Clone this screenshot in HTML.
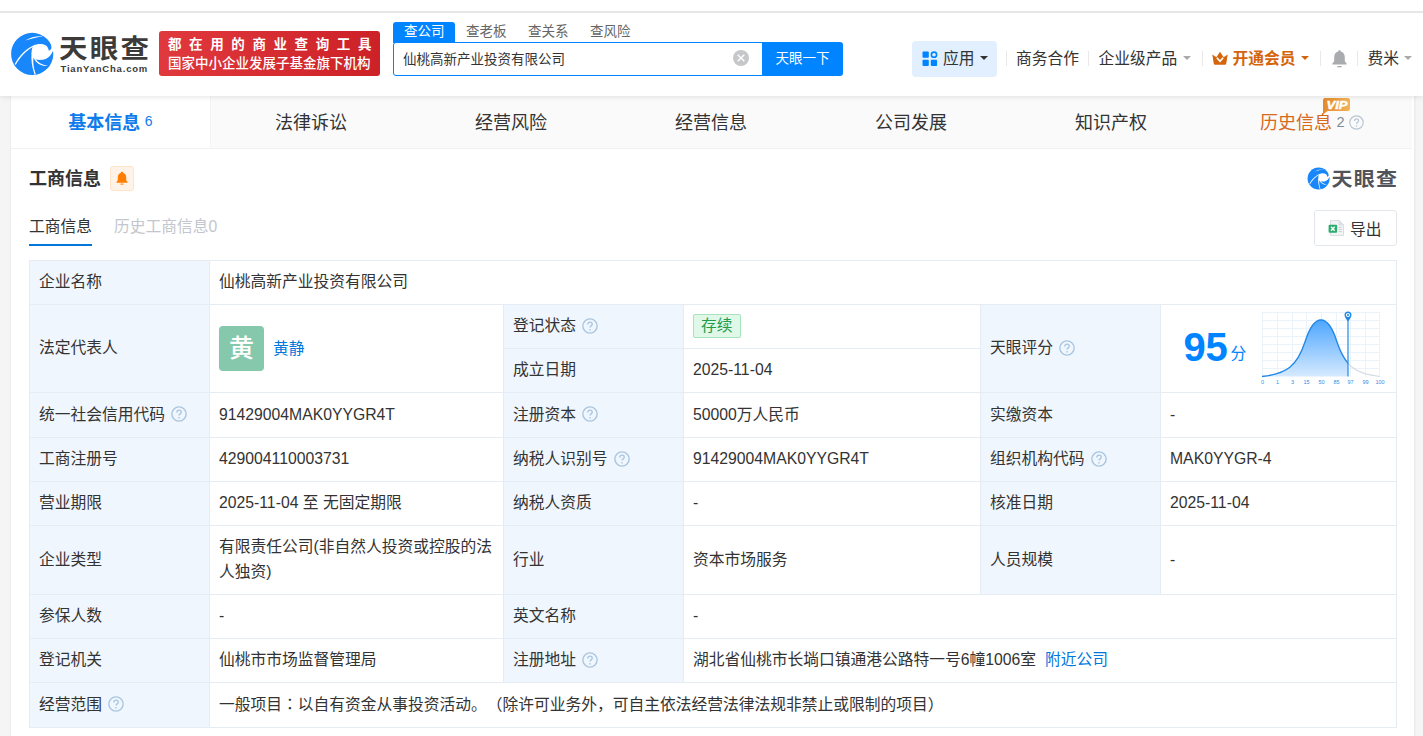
<!DOCTYPE html>
<html lang="zh-CN">
<head>
<meta charset="utf-8">
<title>仙桃高新产业投资有限公司 - 天眼查</title>
<style>
*{box-sizing:border-box;margin:0;padding:0}
html,body{width:1423px;height:736px;overflow:hidden;background:#f5f5f5;}
body{text-spacing-trim:space-all;font-family:"Liberation Sans","Noto Sans CJK SC",sans-serif;color:#333;font-size:15.75px;position:relative}
.abs{position:absolute}
.t{position:absolute;white-space:nowrap;line-height:1}
#hdr{position:absolute;left:0;top:0;width:1423px;height:96px;background:#fff;box-shadow:0 1px 5px rgba(0,0,0,.10);z-index:5}
#topline{position:absolute;left:0;top:11px;width:1423px;height:2px;background:#e6e6e6}
#card{position:absolute;left:11px;top:96px;width:1403px;height:640px;background:#fff;box-shadow:-1px 0 0 #ececec,1.500px 0 0 #ececec}
#tabs{position:absolute;left:0;top:0;width:1401px;height:53px;background:#fafafa;border-bottom:1px solid #f1f1f1}
.tab{position:absolute;top:0;height:52px;line-height:54px;text-align:center;font-size:18px;color:#333;white-space:nowrap}
.tab.on{background:#fff;color:#0f7ceb;font-weight:bold;border-right:1px solid #f3f3f3}
.cnt{font-size:14px;font-weight:normal;margin-left:4.500px;position:relative;top:-3px}
table{position:absolute;left:18px;top:164px;width:1368px;border-collapse:collapse;table-layout:fixed;font-size:15.75px}
td{border:1px solid #e5ecf4;padding:0 9px 2px 9px;vertical-align:middle;line-height:25px;color:#333;white-space:nowrap;overflow:hidden}
td.l{background:#f0f6fd}
.q{display:inline-block;width:16px;height:16px;vertical-align:-2.500px;margin-left:6px}
a{color:#0077dd;text-decoration:none}
.ava{display:inline-block;width:45px;height:45px;line-height:45px;border-radius:4px;background:#85c8ab;color:#fff;font-size:25px;font-weight:500;text-align:center;vertical-align:middle}
.st{display:inline-block;height:24px;line-height:22px;padding:0 7px;position:relative;top:-.5px;border:1px solid #a8e3bf;background:#dff8e8;color:#1f9d4c;border-radius:2px;font-size:15.750px}
</style>
</head>
<body>
<div id="hdr">
  <div id="topline"></div>
  <!-- logo -->
  <svg class="abs" style="left:10px;top:32px" width="44" height="44" viewBox="0 0 44 44">
<circle cx="22.2" cy="21.9" r="21.1" fill="#1787fb"/>
<path d="M38.7 18.7 C38.6 16.6 37.6 14.6 35.6 13.3 C32.6 11.4 27.2 11.6 23.4 13.5 C21.9 16 21.3 19 21.7 22 C22.2 24.3 23.2 26 24.6 27 C27.5 28.2 31.5 28.3 35 27.2 C38.5 26 41.3 23.400 42.600 19.600 L45 19 L45 11 L40.300 10.500 C41.300 12.600 41.700 14.800 41.300 16.600 C40.800 17.800 39.900 18.500 38.700 18.700 Z" fill="#fff"/>
<path d="M15.100 8.500 C20.500 5.200 27 3.800 33 4.400 C27.500 5 21.500 6.500 15.100 8.500 Z" fill="#fff"/>
<path d="M4.800 31.800 C9.200 23.700 15.500 17 23.400 13.400 L24.300 14.300 C17 17.800 10.500 24.500 5.700 33 Z" fill="#fff"/>
<path d="M21.600 20.500 C20.800 27 21.900 35 24.600 42.700 L25.800 42.300 C23.300 35 22.800 28.500 23.800 25 Z" fill="#fff"/>
<path d="M23.800 26 C26 31.500 31.500 34.500 38 34 C32.500 33 28 30.500 25.600 27 Z" fill="#fff"/>
  </svg>
  <div class="t" style="left:59px;top:35.5px;font-size:28.5px;font-weight:700;color:#3d3a3a;letter-spacing:2.2px;transform-origin:0 0;transform:scale(1,.93)">天眼查</div>
  <div class="t" style="left:60.5px;top:63.500px;font-size:9.500px;font-weight:bold;color:#3d3a3a;letter-spacing:.8px">TianYanCha.com</div>
  <!-- red banner -->
  <div class="abs" style="left:159px;top:31px;width:221px;height:45px;border-radius:3px;background:linear-gradient(90deg,#e0393d,#cc2127)"></div>
  <div class="t" style="left:168px;top:38.200px;font-size:13.500px;font-weight:bold;color:#fff;letter-spacing:7.6px">都在用的商业查询工具</div>
  <div class="t" style="left:168px;top:57px;font-size:13.500px;font-weight:500;color:#fff;letter-spacing:0">国家中小企业发展子基金旗下机构</div>
  <!-- search -->
  <div class="abs" style="left:393px;top:22px;width:62px;height:21px;background:#0084ff;border-radius:3px 3px 0 0"></div>
  <div class="t" style="left:404px;top:24.700px;font-size:13.5px;color:#fff">查公司</div>
  <div class="t" style="left:466px;top:24.700px;font-size:13.5px;color:#666">查老板</div>
  <div class="t" style="left:528px;top:24.700px;font-size:13.5px;color:#666">查关系</div>
  <div class="t" style="left:590px;top:24.700px;font-size:13.5px;color:#666">查风险</div>
  <div class="abs" style="left:393px;top:42px;width:371px;height:34px;border:1px solid #0084ff;border-radius:3px 0 0 3px;background:#fff"></div>
  <div class="t" style="left:403px;top:52.500px;font-size:13.500px;color:#333">仙桃高新产业投资有限公司</div>
  <svg class="abs" style="left:733px;top:50px" width="16" height="16" viewBox="0 0 16 16"><circle cx="8" cy="8" r="8" fill="#c6c7cb"/><path d="M4.700 4.700l6.600 6.600M11.300 4.700l-6.600 6.600" stroke="#fff" stroke-width="1.400"/></svg>
  <div class="abs" style="left:762px;top:42px;width:81px;height:34px;background:#0084ff;border-radius:0 3px 3px 0"></div>
  <div class="t" style="left:775.5px;top:51.5px;font-size:13.5px;color:#fff">天眼一下</div>
  <!-- right nav -->
  <div class="abs" style="left:912px;top:41px;width:85px;height:36px;background:#e1effe;border-radius:4px"></div>
  <svg class="abs" style="left:922px;top:51px" width="16" height="16" viewBox="0 0 16 16"><rect x="0.5" y="0.5" width="6.3" height="6.3" rx="1" fill="#0084ff"/><circle cx="12" cy="3.7" r="2.6" fill="none" stroke="#0084ff" stroke-width="1.6"/><rect x="0.5" y="8.7" width="6.3" height="6.3" rx="1" fill="#0084ff"/><rect x="8.8" y="8.7" width="6.3" height="6.3" rx="1" fill="#0084ff"/></svg>
  <div class="t" style="left:943px;top:50.700px;font-size:15.75px;color:#333">应用</div>
  <div class="abs" style="left:980px;top:55.700px;border:4px solid transparent;border-top:4.5px solid #333;border-bottom:0"></div>
  <div class="abs" style="left:1006px;top:51px;width:1px;height:15px;background:#e8e8e8"></div>
  <div class="t" style="left:1016px;top:50.700px;font-size:15.75px;color:#333">商务合作</div>
  <div class="abs" style="left:1088px;top:51px;width:1px;height:15px;background:#e8e8e8"></div>
  <div class="t" style="left:1098.5px;top:50.700px;font-size:15.75px;color:#333">企业级产品</div>
  <div class="abs" style="left:1183px;top:55.700px;border:4px solid transparent;border-top:4.5px solid #aaa;border-bottom:0"></div>
  <div class="abs" style="left:1202px;top:51px;width:1px;height:15px;background:#e8e8e8"></div>
  <svg class="abs" style="left:1212px;top:50px" width="16" height="16" viewBox="0 0 16 16"><path d="M.3 4.600L4.400 7.200 8 1.700l3.600 5.500 4.100-2.600-1.400 8.700q-.2 1.500-1.500 1.500H3.200q-1.300 0-1.500-1.500z" fill="#d5650d"/><path d="M4.900 7.700L8 11.200l3.100-3.500" fill="none" stroke="#fff" stroke-width="1.700"/></svg>
  <div class="t" style="left:1232.5px;top:50.700px;font-size:15.75px;color:#d5650d;font-weight:bold">开通会员</div>
  <div class="abs" style="left:1301px;top:55.700px;border:4px solid transparent;border-top:4.500px solid #d5650d;border-bottom:0"></div>
  <div class="abs" style="left:1320px;top:51px;width:1px;height:15px;background:#e8e8e8"></div>
  <svg class="abs" style="left:1331px;top:49px" width="17" height="20" viewBox="0 0 17 20"><path d="M8.5 1.2c.8 0 1.3.5 1.3 1.2 2.6.7 4 2.9 4 5.6v4.3l1.8 2.2v.9H1.400v-.9l1.800-2.200V8c0-2.700 1.400-4.900 4-5.600 0-.7.500-1.200 1.300-1.200z" fill="#a9abaf"/><path d="M6.300 17h4.400v1.300H6.300z" fill="#a9abaf"/></svg>
  <div class="abs" style="left:1357px;top:51px;width:1px;height:15px;background:#e8e8e8"></div>
  <div class="t" style="left:1367.5px;top:50.700px;font-size:15.75px;color:#333">费米</div>
  <div class="abs" style="left:1404px;top:55.700px;border:4px solid transparent;border-top:4.5px solid #aaa;border-bottom:0"></div>
</div>

<div id="card">
  <div id="tabs">
    <div class="tab on" style="left:0;width:200px">基本信息<span class="cnt">6</span></div>
    <div class="tab" style="left:200px;width:200px">法律诉讼</div>
    <div class="tab" style="left:400px;width:200px">经营风险</div>
    <div class="tab" style="left:600px;width:200px">经营信息</div>
    <div class="tab" style="left:800px;width:200px">公司发展</div>
    <div class="tab" style="left:1000px;width:200px">知识产权</div>
    <div class="tab" style="left:1249px;color:#d8681a">历史信息</div>
  </div>

  <!-- VIP + history extras -->
  <div class="t" style="left:1325.500px;top:18.500px;font-size:14.500px;color:#808c99">2</div>
  <svg class="abs" style="left:1338px;top:19px" width="15" height="15" viewBox="0 0 15 15"><circle cx="7.5" cy="7.5" r="6.700" fill="none" stroke="#b9c6d3" stroke-width="1.200"/><path d="M5.400 6c0-1.300 1-2.100 2.100-2.100s2.100.800 2.100 1.900c0 1.500-2.100 1.600-2.100 3.200" fill="none" stroke="#b9c6d3" stroke-width="1.200"/><circle cx="7.500" cy="11" r=".8" fill="#b9c6d3"/></svg>
  <svg class="abs" style="left:1311px;top:2px" width="29" height="17" viewBox="0 0 29 17"><defs><linearGradient id="vg" x1="0" y1="0" x2="1" y2="0"><stop offset="0" stop-color="#e48a2a"/><stop offset="1" stop-color="#f2b45a"/></linearGradient></defs><path d="M3 0h23a2 2 0 0 1 2 2v9a2 2 0 0 1-2 2H5.500L1 16.500V2a2 2 0 0 1 2-2z" fill="url(#vg)"/><text x="12.700" y="11" transform="scale(1.180,1)" font-family="Liberation Sans,sans-serif" font-size="11" font-weight="bold" font-style="italic" fill="#fff" stroke="#fff" stroke-width=".45" text-anchor="middle">VIP</text></svg>

  <!-- section head -->
  <div class="t" style="left:18px;top:74px;font-size:18px;font-weight:bold;color:#333">工商信息</div>
  <div class="abs" style="left:99px;top:70px;width:24px;height:25px;background:#fff3e8;border:1px solid #ffe4cc;border-radius:3px"></div>
  <svg class="abs" style="left:104px;top:75px" width="14" height="15" viewBox="0 0 14 15"><path d="M7 .8c.7 0 1.100.4 1.100 1 2 .6 3.100 2.300 3.100 4.400v3.100l1.300 1.700v.7H1.500V11l1.300-1.700V6.200c0-2.100 1.100-3.800 3.100-4.400 0-.6.400-1 1.100-1z" fill="#ff7d00"/><path d="M5.400 12.600h3.200v1H5.400z" fill="#ff7d00"/></svg>
  <!-- small logo -->
  <svg class="abs" style="left:1295.500px;top:71px" width="23" height="23" viewBox="0 0 44 44">
<circle cx="22.2" cy="21.9" r="21.1" fill="#1787fb"/>
<path d="M38.7 18.7 C38.6 16.6 37.6 14.6 35.6 13.3 C32.6 11.4 27.2 11.6 23.4 13.5 C21.9 16 21.3 19 21.7 22 C22.2 24.3 23.2 26 24.6 27 C27.5 28.2 31.5 28.3 35 27.2 C38.5 26 41.3 23.400 42.600 19.600 L45 19 L45 11 L40.300 10.500 C41.300 12.600 41.700 14.800 41.300 16.600 C40.800 17.800 39.900 18.500 38.700 18.700 Z" fill="#fff"/>
<path d="M15.100 8.500 C20.500 5.200 27 3.800 33 4.400 C27.500 5 21.500 6.500 15.100 8.500 Z" fill="#fff"/>
<path d="M4.800 31.800 C9.200 23.700 15.500 17 23.400 13.400 L24.300 14.300 C17 17.800 10.500 24.500 5.700 33 Z" fill="#fff"/>
<path d="M21.600 20.500 C20.800 27 21.900 35 24.600 42.700 L25.800 42.300 C23.300 35 22.800 28.500 23.800 25 Z" fill="#fff"/>
<path d="M23.800 26 C26 31.500 31.500 34.500 38 34 C32.500 33 28 30.500 25.600 27 Z" fill="#fff"/>
  </svg>
  <div class="t" style="left:1320.500px;top:74px;font-size:21px;font-weight:700;color:#50535a;letter-spacing:1.300px;transform-origin:0 0;transform:scale(1,.9)">天眼查</div>
  <!-- sub tabs -->
  <div class="t" style="left:18px;top:123px;font-size:15.750px;color:#333">工商信息</div>
  <div class="abs" style="left:18px;top:148px;width:63px;height:2px;background:#0077dd"></div>
  <div class="t" style="left:103px;top:123px;font-size:15.750px;color:#c3c7cd">历史工商信息0</div>
  <!-- export -->
  <div class="abs" style="left:1303px;top:114px;width:83px;height:36px;border:1px solid #e3e6ea;border-radius:3px;background:#fff"></div>
  <svg class="abs" style="left:1317px;top:124px" width="16" height="16" viewBox="0 0 16 16"><path d="M2.500 .5h8.500l4.500 4.500v10.500h-13z" fill="#f2f3f5" stroke="#d3d6db" stroke-width=".8"/><path d="M11 .5v4.500h4.500z" fill="#dfe1e5" stroke="#d3d6db" stroke-width=".6"/><rect x=".6" y="4.700" width="8.500" height="8.100" rx="1" fill="#2bab6e"/><path d="M3 6.700l3.700 4.100M6.700 6.700l-3.700 4.100" stroke="#fff" stroke-width="1.300"/><path d="M10.700 7.500h3M10.700 9.500h3M10.700 11.500h3" stroke="#cdd0d6" stroke-width="1"/></svg>
  <div class="t" style="left:1339px;top:125.500px;font-size:15.750px;color:#333">导出</div>

  <table>
    <colgroup><col style="width:180px"><col style="width:294px"><col style="width:180px"><col style="width:297px"><col style="width:180px"><col style="width:236px"></colgroup>
    <tr style="height:44px"><td class="l">企业名称</td><td colspan="5">仙桃高新产业投资有限公司</td></tr>
    <tr style="height:44px"><td class="l" rowspan="2">法定代表人</td><td rowspan="2" style="padding-bottom:0"><span class="ava">黄</span><a style="margin-left:9px;vertical-align:middle">黄静</a></td><td class="l">登记状态<svg class="q" viewBox="0 0 15 15"><circle cx="7.5" cy="7.5" r="6.7" fill="none" stroke="#a9c6e0" stroke-width="1.3"/><path d="M5.4 6c0-1.300 1-2.100 2.100-2.100s2.100.800 2.100 1.900c0 1.500-2.100 1.600-2.100 3.200" fill="none" stroke="#a9c6e0" stroke-width="1.300"/><circle cx="7.5" cy="11" r=".8" fill="#a9c6e0"/></svg></td><td><span class="st">存续</span></td><td class="l" rowspan="2">天眼评分<svg class="q" viewBox="0 0 15 15"><circle cx="7.5" cy="7.5" r="6.7" fill="none" stroke="#a9c6e0" stroke-width="1.3"/><path d="M5.4 6c0-1.300 1-2.100 2.100-2.100s2.100.800 2.100 1.900c0 1.500-2.100 1.600-2.100 3.200" fill="none" stroke="#a9c6e0" stroke-width="1.300"/><circle cx="7.5" cy="11" r=".8" fill="#a9c6e0"/></svg></td><td rowspan="2" style="padding:0;position:relative"><div class="t" style="left:22.500px;top:21.500px;font-size:40px;font-weight:bold;color:#0084ff;letter-spacing:-.2px">95</div><div class="t" style="left:69.500px;top:40.500px;font-size:15.750px;color:#0084ff">分</div>
<svg class="abs" style="left:96.300px;top:-.8px" width="132" height="80" viewBox="0 0 132 80">
<defs><linearGradient id="bg" x1="0" y1="0" x2="0" y2="1"><stop offset="0" stop-color="#4da6ff"/><stop offset="1" stop-color="#d6eaff"/></linearGradient><clipPath id="cl"><rect x="0" y="0" width="91" height="80"/></clipPath></defs>
<g stroke="#eaf2fc" stroke-width="1" fill="none">
<path d="M5.500 8.500h117M5.500 16.500h117M5.500 24.500h117M5.500 32.500h117M5.500 40.500h117M5.500 48.500h117M5.500 56.500h117M5.500 64.500h117"/>
<path d="M5.500 8v65M20.500 8v65M35.500 8v65M49.500 8v65M64.500 8v65M79.500 8v65M93.500 8v65M108.500 8v65M122.500 8v65"/></g>
<path id="bell" d="M5 72.500 C30 70 40 62 48 38 C53 22 58 16 64 16 C70 16 75 22 80 38 C88 62 98 70 123 72.500" fill="none" stroke="#d5dbe2" stroke-width="1.200"/>
<g clip-path="url(#cl)"><path d="M5 72.500 C30 70 40 62 48 38 C53 22 58 16 64 16 C70 16 75 22 80 38 C88 62 98 70 123 72.500 Z" fill="url(#bg)"/><path d="M5 72.500 C30 70 40 62 48 38 C53 22 58 16 64 16 C70 16 75 22 80 38 C88 62 98 70 123 72.500" fill="none" stroke="#2188e8" stroke-width="1.300"/></g>
<path d="M91 12v60.500" stroke="#2188e8" stroke-width="1.200"/>
<path d="M91 17.500c-2.300-3.200-3.500-4.600-3.500-6.500a3.500 3.500 0 0 1 7 0c0 1.900-1.200 3.300-3.500 6.500z" fill="#2188e8"/><circle cx="91" cy="11" r="2.100" fill="#fff"/><circle cx="91" cy="11" r="1.050" fill="#2188e8"/>
<g font-family="Liberation Sans,sans-serif" font-size="5.500" fill="#2f8fe8" text-anchor="middle"><text x="5.500" y="80">0</text><text x="20.500" y="80">1</text><text x="35.500" y="80">3</text><text x="49.500" y="80">15</text><text x="64.500" y="80">50</text><text x="79.500" y="80">85</text><text x="93.500" y="80">97</text><text x="108.500" y="80">99</text><text x="123" y="80">100</text></g>
</svg></td></tr>
    <tr style="height:44px"><td class="l">成立日期</td><td>2025-11-04</td></tr>
    <tr style="height:45px"><td class="l">统一社会信用代码<svg class="q" viewBox="0 0 15 15"><circle cx="7.5" cy="7.5" r="6.7" fill="none" stroke="#a9c6e0" stroke-width="1.3"/><path d="M5.4 6c0-1.300 1-2.100 2.100-2.100s2.100.800 2.100 1.900c0 1.500-2.100 1.600-2.100 3.200" fill="none" stroke="#a9c6e0" stroke-width="1.300"/><circle cx="7.5" cy="11" r=".8" fill="#a9c6e0"/></svg></td><td>91429004MAK0YYGR4T</td><td class="l">注册资本<svg class="q" viewBox="0 0 15 15"><circle cx="7.5" cy="7.5" r="6.7" fill="none" stroke="#a9c6e0" stroke-width="1.3"/><path d="M5.4 6c0-1.300 1-2.100 2.100-2.100s2.100.800 2.100 1.900c0 1.500-2.100 1.600-2.100 3.200" fill="none" stroke="#a9c6e0" stroke-width="1.300"/><circle cx="7.5" cy="11" r=".8" fill="#a9c6e0"/></svg></td><td>50000万人民币</td><td class="l">实缴资本</td><td>-</td></tr>
    <tr style="height:44px"><td class="l">工商注册号</td><td>429004110003731</td><td class="l">纳税人识别号<svg class="q" viewBox="0 0 15 15"><circle cx="7.5" cy="7.5" r="6.7" fill="none" stroke="#a9c6e0" stroke-width="1.3"/><path d="M5.4 6c0-1.300 1-2.100 2.100-2.100s2.100.800 2.100 1.900c0 1.500-2.100 1.600-2.100 3.200" fill="none" stroke="#a9c6e0" stroke-width="1.300"/><circle cx="7.5" cy="11" r=".8" fill="#a9c6e0"/></svg></td><td>91429004MAK0YYGR4T</td><td class="l">组织机构代码<svg class="q" viewBox="0 0 15 15"><circle cx="7.5" cy="7.5" r="6.7" fill="none" stroke="#a9c6e0" stroke-width="1.3"/><path d="M5.4 6c0-1.300 1-2.100 2.100-2.100s2.100.800 2.100 1.900c0 1.500-2.100 1.600-2.100 3.200" fill="none" stroke="#a9c6e0" stroke-width="1.300"/><circle cx="7.5" cy="11" r=".8" fill="#a9c6e0"/></svg></td><td>MAK0YYGR-4</td></tr>
    <tr style="height:44px"><td class="l">营业期限</td><td>2025-11-04 至 无固定期限</td><td class="l">纳税人资质</td><td>-</td><td class="l">核准日期</td><td>2025-11-04</td></tr>
    <tr style="height:69px"><td class="l">企业类型</td><td style="white-space:normal">有限责任公司(非自然人投资或控股的法人独资)</td><td class="l">行业</td><td>资本市场服务</td><td class="l">人员规模</td><td>-</td></tr>
    <tr style="height:44px"><td class="l">参保人数</td><td>-</td><td class="l">英文名称</td><td colspan="3">-</td></tr>
    <tr style="height:44px"><td class="l">登记机关</td><td>仙桃市市场监督管理局</td><td class="l">注册地址<svg class="q" viewBox="0 0 15 15"><circle cx="7.5" cy="7.5" r="6.7" fill="none" stroke="#a9c6e0" stroke-width="1.3"/><path d="M5.4 6c0-1.300 1-2.100 2.100-2.100s2.100.800 2.100 1.900c0 1.500-2.100 1.600-2.100 3.200" fill="none" stroke="#a9c6e0" stroke-width="1.300"/><circle cx="7.5" cy="11" r=".8" fill="#a9c6e0"/></svg></td><td colspan="3">湖北省仙桃市长埫口镇通港公路特一号6幢1006室<a style="margin-left:9px">附近公司</a></td></tr>
    <tr style="height:45px"><td class="l">经营范围<svg class="q" viewBox="0 0 15 15"><circle cx="7.5" cy="7.5" r="6.7" fill="none" stroke="#a9c6e0" stroke-width="1.3"/><path d="M5.4 6c0-1.300 1-2.100 2.100-2.100s2.100.800 2.100 1.900c0 1.500-2.100 1.600-2.100 3.200" fill="none" stroke="#a9c6e0" stroke-width="1.300"/><circle cx="7.5" cy="11" r=".8" fill="#a9c6e0"/></svg></td><td colspan="5">一般项目<span lang="ja" style="font-family:&quot;Noto Sans CJK JP&quot;,sans-serif">：</span>以自有资金从事投资活动。（除许可业务外，可自主依法经营法律法规非禁止或限制的项目）</td></tr>
  </table>
</div>
</body>
</html>
